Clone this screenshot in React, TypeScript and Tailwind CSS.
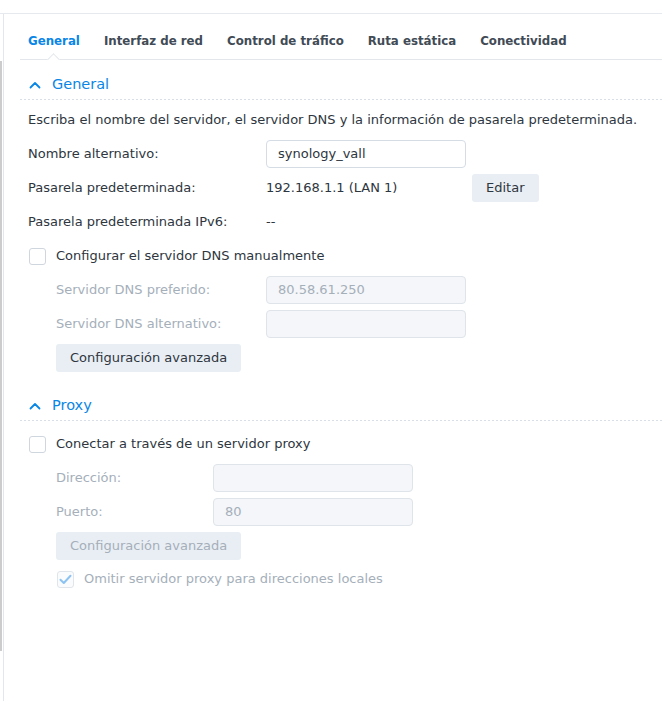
import React from "react";

const tabs = ["General", "Interfaz de red", "Control de tráfico", "Ruta estática", "Conectividad"];

function Chevron() {
  return (
    <svg width="12" height="8" viewBox="0 0 12 8" fill="none" className="shrink-0">
      <path d="M1.5 6.5 L6 2 L10.5 6.5" stroke="#0a86e6" strokeWidth="1.8" strokeLinecap="round" strokeLinejoin="round" />
    </svg>
  );
}

function SectionHeader({ title }: { title: string }) {
  return (
    <div>
      <div className="flex items-center h-[29px] pl-[9px] gap-[11px]">
        <Chevron />
        <span className="text-[14.5px] text-[#0a86e6]">{title}</span>
      </div>
      <div className="h-px bg-[repeating-linear-gradient(to_right,#d9dfe6_0_2px,transparent_2px_4px)]" />
    </div>
  );
}

function Checkbox({ checked = false, disabled = false }: { checked?: boolean; disabled?: boolean }) {
  return (
    <span
      className={`w-[17px] h-[17px] rounded-[3px] border shrink-0 flex items-center justify-center ${
        disabled ? "border-[#e0e5eb] bg-[#fafbfc]" : "border-[#cfd6de] bg-white"
      }`}
    >
      {checked && (
        <svg width="13" height="11" viewBox="0 0 13 11" fill="none">
          <path d="M1.5 5.8 L4.8 9 L11.5 1.8" stroke="#8cc3f2" strokeWidth="2" strokeLinecap="round" strokeLinejoin="round" />
        </svg>
      )}
    </span>
  );
}

function Input({ value = "", disabled = false }: { value?: string; disabled?: boolean }) {
  return (
    <div
      className={`w-[200px] h-[28px] rounded-[4px] border flex items-center px-[11px] ${
        disabled ? "bg-[#f4f6f9] border-[#dfe4ea] text-[#a5afba]" : "bg-white border-[#d5dce4] text-[#2e3640]"
      }`}
    >
      {value}
    </div>
  );
}

function Button({ label, disabled = false }: { label: string; disabled?: boolean }) {
  return (
    <div
      className={`h-[28px] rounded-[3px] bg-[#e9eef4] inline-flex items-center justify-center px-[14px] ${
        disabled ? "text-[#a5afba]" : "text-[#2e3640]"
      }`}
    >
      {label}
    </div>
  );
}

export default function App() {
  return (
    <div
      className="w-[662px] h-[701px] bg-white pt-[13px] text-[13px] text-[#2e3640] overflow-hidden"
      style={{ fontFamily: "'DejaVu Sans', Verdana, sans-serif" }}
    >
      <div className="border-t border-[#e6eaef] h-full flex">
        <div className="w-[3px] shrink-0">
          <div className="mt-[47px] h-[590px] w-[1.5px] bg-[#cccccc]" />
        </div>
        <div className="flex-1 border-l border-[#e3e7ec] pl-[16px]">
          {/* tabs */}
          <div className="relative border-b border-[#e3e7ec] h-[46px] flex items-center gap-[24px] pl-[8px] pt-[10px] text-[11.8px]">
            {tabs.map((t, i) => (
              <span key={t} className={`font-bold ${i === 0 ? "text-[#0a86e6]" : "text-[#414b55]"}`}>
                {t}
              </span>
            ))}
            <span className="absolute left-[29px] bottom-[-5px] w-[9px] h-[9px] bg-white border-l border-t border-[#e3e7ec] rotate-45" />
          </div>

          <div className="pt-[10px]">
            <SectionHeader title="General" />
            <div className="pl-[8px]">
              <div className="h-[20px] mt-[10px] flex items-center">
                Escriba el nombre del servidor, el servidor DNS y la información de pasarela predeterminada.
              </div>
              <div className="flex items-center mt-[10px] h-[28px]">
                <span className="w-[238px]">Nombre alternativo:</span>
                <Input value="synology_vall" />
              </div>
              <div className="flex items-center mt-[6px] h-[28px]">
                <span className="w-[238px]">Pasarela predeterminada:</span>
                <span className="w-[206px]">192.168.1.1 (LAN 1)</span>
                <Button label="Editar" />
              </div>
              <div className="flex items-center mt-[6px] h-[28px]">
                <span className="w-[238px]">Pasarela predeterminada IPv6:</span>
                <span>--</span>
              </div>
              <div className="flex items-center mt-[6px] h-[28px] gap-[10px] pl-[1px]">
                <Checkbox />
                <span>Configurar el servidor DNS manualmente</span>
              </div>
              <div className="pl-[28px] text-[#a5afba]">
                <div className="flex items-center mt-[6px] h-[28px]">
                  <span className="w-[210px]">Servidor DNS preferido:</span>
                  <Input value="80.58.61.250" disabled />
                </div>
                <div className="flex items-center mt-[6px] h-[28px]">
                  <span className="w-[210px]">Servidor DNS alternativo:</span>
                  <Input disabled />
                </div>
                <div className="mt-[6px]">
                  <Button label="Configuración avanzada" />
                </div>
              </div>
            </div>
          </div>

          <div className="mt-[19px]">
            <SectionHeader title="Proxy" />
            <div className="pl-[8px]">
              <div className="flex items-center mt-[9px] h-[28px] gap-[10px] pl-[1px]">
                <Checkbox />
                <span>Conectar a través de un servidor proxy</span>
              </div>
              <div className="pl-[28px] text-[#a5afba]">
                <div className="flex items-center mt-[6px] h-[28px]">
                  <span className="w-[157px]">Dirección:</span>
                  <Input disabled />
                </div>
                <div className="flex items-center mt-[6px] h-[28px]">
                  <span className="w-[157px]">Puerto:</span>
                  <Input value="80" disabled />
                </div>
                <div className="mt-[6px]">
                  <Button label="Configuración avanzada" disabled />
                </div>
                <div className="flex items-center mt-[5px] h-[28px] gap-[10px] pl-[1px]">
                  <Checkbox checked disabled />
                  <span>Omitir servidor proxy para direcciones locales</span>
                </div>
              </div>
            </div>
          </div>
        </div>
      </div>
    </div>
  );
}
